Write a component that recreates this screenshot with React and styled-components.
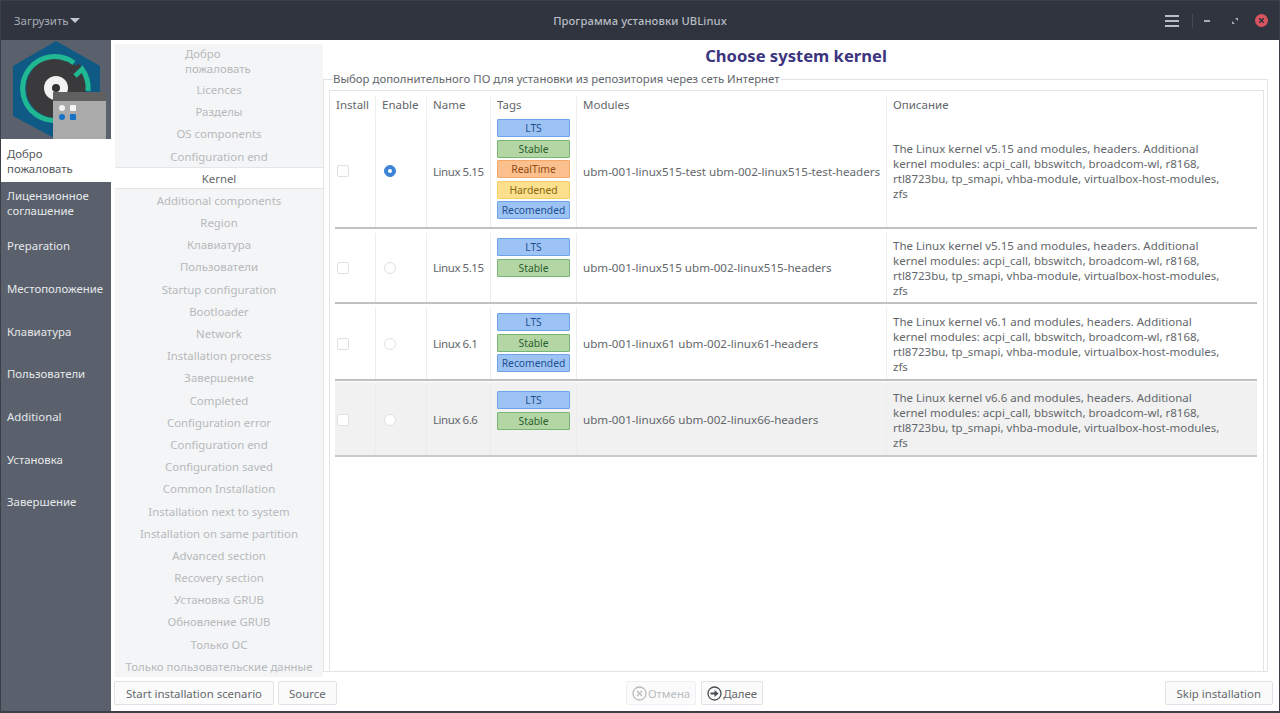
import React from 'react';
import styled, { createGlobalStyle } from 'styled-components';

const GlobalStyle = createGlobalStyle`
  html, body { margin: 0; padding: 0; background: #fff; }
  body { font-family: "Noto Sans", "Liberation Sans", sans-serif; font-size: 11.4px; }
`;

const Window = styled.div`
  width: 1280px;
  height: 713px;
  box-sizing: border-box;
  display: flex;
  flex-direction: column;
  overflow: hidden;
  background: #fff;
  border: 1px solid #3b3f47;
  border-bottom-width: 2px;
  color: #63676b;
`;

const TitleBar = styled.header`
  height: 39px;
  flex: none;
  background: #2f343f;
  display: grid;
  grid-template-columns: 1fr auto 1fr;
  align-items: center;
  color: #b9bdc4;
`;

const LoadMenu = styled.div`
  display: flex;
  align-items: center;
  gap: 2px;
  padding-left: 13px;
  color: #a9adb5;
`;

const Caret = styled.span`
  width: 0;
  height: 0;
  border-left: 5px solid transparent;
  border-right: 5px solid transparent;
  border-top: 5px solid #c4c8ce;
`;

const Title = styled.div`
  font-weight: 500;
  font-size: 11.2px;
  color: #b9bdc4;
  letter-spacing: 0.1px;
`;

const TitleControls = styled.div`
  display: flex;
  justify-content: flex-end;
  align-items: center;
  height: 100%;
  padding-right: 11px;
`;

const ControlIcon = styled.svg`
  display: block;
  margin-left: ${p => p.$gap || 0}px;
`;

const Divider = styled.span`
  width: 1px;
  height: 14px;
  background: #454a55;
  margin-left: 13px;
`;

const Body = styled.div`
  flex: 1;
  min-height: 0;
  display: flex;
`;

const Sidebar = styled.nav`
  width: 110px;
  flex: none;
  background: #5a616c;
  display: flex;
  flex-direction: column;
`;

const LogoBox = styled.div`
  height: 99px;
  flex: none;
`;

const SideItem = styled.div`
  height: 42.67px;
  flex: none;
  box-sizing: border-box;
  display: flex;
  align-items: center;
  padding: ${p => (p.$active ? 1 : 0.2)}px 0 0 6px;
  line-height: 15px;
  background: ${p => (p.$active ? '#fff' : 'transparent')};
  color: ${p => (p.$active ? '#54585c' : '#e6e8eb')};
`;

const Content = styled.div`
  flex: 1;
  min-width: 0;
  display: flex;
  flex-direction: column;
`;

const Upper = styled.div`
  flex: 1;
  min-height: 0;
  display: flex;
`;

const StepList = styled.div`
  width: 208px;
  height: 633px;
  flex: none;
  margin: 4px 0 0 4px;
  background: #f4f5f6;
  overflow: hidden;
  color: #b6b9bc;
`;

const Step = styled.div`
  box-sizing: border-box;
  height: 22.19px;
  display: flex;
  align-items: center;
  justify-content: center;
  white-space: nowrap;
  background: ${p => (p.$active ? '#fff' : 'transparent')};
  color: ${p => (p.$active ? '#63676b' : 'inherit')};
  box-shadow: ${p => (p.$active ? 'inset 0 1px 0 #e4e5e7, inset 0 -1px 0 #e4e5e7' : 'none')};
`;

const WelcomeStep = styled.div`
  height: 34.4px;
  padding: 2px 0 0 70px;
  box-sizing: border-box;
  line-height: 15px;
`;

const Main = styled.main`
  flex: 1;
  min-width: 0;
  display: flex;
  flex-direction: column;
`;

const Heading = styled.h1`
  margin: 0;
  height: 39px;
  flex: none;
  box-sizing: border-box;
  padding: 4px 10px 0 0;
  text-align: center;
  font-size: 16.6px;
  line-height: 24px;
  font-weight: 700;
  color: #3b3580;
`;

const Group = styled.fieldset`
  margin: -7px 11px 0 0;
  height: 600px;
  flex: none;
  box-sizing: border-box;
  min-width: 0;
  border: 1px solid #e3e4e5;
  padding: 4px 3px 3px 5px;
  display: flex;
`;

const GroupLegend = styled.legend`
  padding: 0 1px 0 0;
  margin-left: 4px;
  line-height: 14px;
  font-size: 11.4px;
  color: #63676b;
`;

const TableFrame = styled.div`
  flex: 1;
  border: 1px solid #e3e4e5;
  padding: 3px 6px 0 5px;
  min-width: 0;
  height: 582px;
  box-sizing: border-box;
  font-size: 11.5px;
`;

const columns = '40px 51px 64px 86px 310px 1fr';

const HeadRow = styled.div`
  display: grid;
  grid-template-columns: ${columns};
  height: 21px;
  align-items: center;
`;

const HeadCell = styled.div`
  padding-left: ${p => (p.$first ? 1 : 6)}px;
  line-height: 18px;
  border-left: ${p => (p.$first ? 'none' : '1px solid #eeeeef')};
`;

const Row = styled.div`
  display: grid;
  grid-template-columns: ${columns};
  box-sizing: border-box;
  height: ${p => p.$height}px;
  padding-top: ${p => (p.$selected ? 2 : 0)}px;
  background: ${p => (p.$selected ? '#f1f1f1' : 'transparent')};
`;

const RowLine = styled.div`
  height: 2px;
  background: ${p => (p.$soft ? '#c9cacb' : '#bfc0c1')};
  margin-bottom: ${p => p.$after}px;
`;

const Cell = styled.div`
  display: flex;
  align-items: center;
  box-sizing: border-box;
  min-width: 0;
  padding: 0 6px;
  border-left: ${p => (p.$first ? 'none' : '1px solid #ececed')};
  line-height: 15px;
  white-space: ${p => (p.$wrap ? 'normal' : 'nowrap')};
`;

const NameCell = styled(Cell)`
  letter-spacing: -0.45px;
`;

const ModulesCell = styled(Cell)`
  font-size: 11.6px;
`;

const ControlCell = styled(Cell)`
  padding-left: ${p => (p.$first ? 2 : 8)}px;
`;

const Description = styled.span`
  max-width: 332px;
`;

const CheckBox = styled.span`
  width: 10px;
  height: 10px;
  border: 1px solid #e0e1e2;
  border-radius: 2px;
  background: ${p => (p.$filled ? '#fff' : 'transparent')};
`;

const Radio = styled.span`
  width: 12px;
  height: 12px;
  border-radius: 50%;
  box-sizing: border-box;
  border: 1px solid ${p => (p.$on ? '#3d84d6' : '#e0e1e2')};
  background: ${p => (p.$on ? '#3d84d6' : p.$filled ? '#fff' : 'transparent')};
  display: flex;
  align-items: center;
  justify-content: center;
  &::after {
    content: '';
    display: ${p => (p.$on ? 'block' : 'none')};
    width: 4px;
    height: 4px;
    border-radius: 50%;
    background: #fff;
  }
`;

const TagStack = styled(Cell)`
  flex-direction: column;
  justify-content: flex-start;
  align-items: flex-start;
  padding: ${p => p.$top}px 0 0 6px;
  gap: 2.5px;
`;

const tagColors = {
  blue: ['#9dc3f5', '#6ea3e8', '#1f4f8f'],
  green: ['#b3d6a4', '#76b573', '#2c5f2e'],
  orange: ['#fbc08d', '#f3a866', '#8f4b12'],
  yellow: ['#fde08d', '#f5cf62', '#86670f']
};

const Tag = styled.div`
  width: 73px;
  height: 18px;
  box-sizing: border-box;
  border-radius: 1px;
  font-size: 10.3px;
  line-height: 16px;
  text-align: center;
  background: ${p => tagColors[p.$kind][0]};
  border: 1px solid ${p => tagColors[p.$kind][1]};
  color: ${p => tagColors[p.$kind][2]};
`;

const Footer = styled.footer`
  height: 34px;
  flex: none;
  box-sizing: border-box;
  display: grid;
  grid-template-columns: 1fr auto 1fr;
  align-items: center;
  padding: 0 4px 2px 3px;
`;

const ButtonGroup = styled.div`
  display: flex;
  gap: ${p => p.$gap || 5}px;
  justify-content: ${p => (p.$end ? 'flex-end' : 'flex-start')};
  padding-right: ${p => (p.$end ? 2 : 0)}px;
`;

const Button = styled.div`
  height: 24px;
  box-sizing: border-box;
  padding: 0 ${p => p.$pad || 11}px;
  display: flex;
  align-items: center;
  gap: 1px;
  border: 1px solid ${p => (p.$disabled ? '#eeeff0' : '#e1e2e3')};
  border-radius: 2px;
  background: #fbfbfb;
  color: ${p => (p.$disabled ? '#b9bcbf' : '#63676b')};
  white-space: nowrap;
`;

const Logo = () => (
  <svg width="110" height="99" viewBox="0 0 110 99">
    <polygon points="55,1 99,26 99,76 55,99 12,76 12,26" fill="#0f5a85" />
    <g transform="translate(-1 -1)">
      <circle cx="56" cy="49" r="30" fill="#3a3a3c" />
      <path d="M74 24 A32 32 0 1 0 60 81" fill="none" stroke="#1fb893" strokeWidth="5" />
      <path d="M75 37 L82 30 A32 32 0 0 1 88 52" fill="none" stroke="#1fb893" strokeWidth="5" />
      <path d="M64 41 L80 26" stroke="#3a3a3c" strokeWidth="4" />
      <circle cx="56" cy="49" r="12" fill="#f2f2f2" />
      <circle cx="56" cy="49" r="4" fill="#333" />
    </g>
    <rect x="52" y="52" width="53" height="47" fill="#aaaaaa" />
    <rect x="52" y="52" width="53" height="9" fill="#606060" />
    <rect x="58" y="65" width="6" height="6" rx="3" fill="#f4f4f4" />
    <rect x="69" y="65" width="6" height="6" rx="1" fill="#f4f4f4" />
    <rect x="58" y="74" width="6" height="6" rx="3" fill="#1672c4" />
    <rect x="69" y="74" width="6" height="6" rx="1" fill="#1672c4" />
  </svg>
);

const sideItems = [
  ['Лицензионное', 'соглашение'],
  ['Preparation'],
  ['Местоположение'],
  ['Клавиатура'],
  ['Пользователи'],
  ['Additional'],
  ['Установка'],
  ['Завершение']
];

const steps = [
  'Licences', 'Разделы', 'OS components', 'Configuration end', 'Kernel', 'Additional components',
  'Region', 'Клавиатура', 'Пользователи', 'Startup configuration', 'Bootloader', 'Network',
  'Installation process', 'Завершение', 'Completed', 'Configuration error', 'Configuration end',
  'Configuration saved', 'Common Installation', 'Installation next to system',
  'Installation on same partition', 'Advanced section', 'Recovery section', 'Установка GRUB',
  'Обновление GRUB', 'Только ОС', 'Только пользовательские данные'
];

const describe = v =>
  `The Linux kernel ${v} and modules, headers. Additional kernel modules: acpi_call, bbswitch, broadcom-wl, r8168, rtl8723bu, tp_smapi, vhba-module, virtualbox-host-modules, zfs`;

const rows = [
  {
    name: 'Linux 5.15', height: 112, after: 4, top: 4, on: true,
    tags: [['blue', 'LTS'], ['green', 'Stable'], ['orange', 'RealTime'], ['yellow', 'Hardened'], ['blue', 'Recomended']],
    modules: 'ubm-001-linux515-test ubm-002-linux515-test-headers', desc: describe('v5.15')
  },
  {
    name: 'Linux 5.15', height: 69, after: 4, top: 5,
    tags: [['blue', 'LTS'], ['green', 'Stable']],
    modules: 'ubm-001-linux515 ubm-002-linux515-headers', desc: describe('v5.15')
  },
  {
    name: 'Linux 6.1', height: 71, after: 1, top: 5,
    tags: [['blue', 'LTS'], ['green', 'Stable'], ['blue', 'Recomended']],
    modules: 'ubm-001-linux61 ubm-002-linux61-headers', desc: describe('v6.1')
  },
  {
    name: 'Linux 6.6', height: 73, after: 0, top: 7, selected: true,
    tags: [['blue', 'LTS'], ['green', 'Stable']],
    modules: 'ubm-001-linux66 ubm-002-linux66-headers', desc: describe('v6.6')
  }
];

const headers = ['Install', 'Enable', 'Name', 'Tags', 'Modules', 'Описание'];

export default function App() {
  return (
    <Window>
      <GlobalStyle />
      <TitleBar>
        <LoadMenu>Загрузить <Caret /></LoadMenu>
        <Title>Программа установки UBLinux</Title>
        <TitleControls>
          <ControlIcon width="14" height="12" viewBox="0 0 14 12">
            <path d="M0 1h14M0 6h14M0 11h14" stroke="#b9bdc4" strokeWidth="2" />
          </ControlIcon>
          <Divider />
          <ControlIcon $gap={10} width="8" height="4" viewBox="0 0 8 4">
            <path d="M1 2h6" stroke="#a9adb5" strokeWidth="2" />
          </ControlIcon>
          <ControlIcon $gap={21} width="6" height="6" viewBox="0 0 6 6">
            <path d="M3 0h3v3zM0 3l3 3H0z" fill="#a9adb5" />
          </ControlIcon>
          <ControlIcon $gap={17} width="13" height="13" viewBox="0 0 13 13">
            <circle cx="6.5" cy="6.5" r="6.5" fill="#d9545f" />
            <path d="M4.2 4.2l4.6 4.6M8.8 4.2l-4.6 4.6" stroke="#2f343f" strokeWidth="1.6" />
          </ControlIcon>
        </TitleControls>
      </TitleBar>
      <Body>
        <Sidebar>
          <LogoBox><Logo /></LogoBox>
          <SideItem $active><span>Добро<br />пожаловать</span></SideItem>
          {sideItems.map(lines => (
            <SideItem key={lines[0]}>
              <span>{lines[0]}{lines[1] && <><br />{lines[1]}</>}</span>
            </SideItem>
          ))}
        </Sidebar>
        <Content>
          <Upper>
            <StepList>
              <WelcomeStep>Добро<br />пожаловать</WelcomeStep>
              {steps.map((s, i) => (
                <Step key={i} $active={s === 'Kernel'}>{s}</Step>
              ))}
            </StepList>
            <Main>
              <Heading>Choose system kernel</Heading>
              <Group>
                <GroupLegend>Выбор дополнительного ПО для установки из репозитория через сеть Интернет</GroupLegend>
                <TableFrame>
                  <HeadRow>
                    {headers.map((h, i) => <HeadCell key={h} $first={i === 0}>{h}</HeadCell>)}
                  </HeadRow>
                  {rows.map(r => (
                    <React.Fragment key={r.modules}>
                      <Row $height={r.height} $selected={r.selected}>
                        <ControlCell $first><CheckBox $filled={r.selected} /></ControlCell>
                        <ControlCell><Radio $on={r.on} $filled={r.selected} /></ControlCell>
                        <NameCell>{r.name}</NameCell>
                        <TagStack $top={r.top}>
                          {r.tags.map(([kind, text]) => <Tag key={text} $kind={kind}>{text}</Tag>)}
                        </TagStack>
                        <ModulesCell>{r.modules}</ModulesCell>
                        <Cell $wrap><Description>{r.desc}</Description></Cell>
                      </Row>
                      <RowLine $after={r.after} $soft={r.selected} />
                    </React.Fragment>
                  ))}
                </TableFrame>
              </Group>
            </Main>
          </Upper>
          <Footer>
            <ButtonGroup $gap={4}>
              <Button>Start installation scenario</Button>
              <Button $pad={10}>Source</Button>
            </ButtonGroup>
            <ButtonGroup>
              <Button $disabled $pad={5}>
                <svg width="15" height="15" viewBox="0 0 15 15">
                  <circle cx="7.5" cy="7.5" r="6.5" fill="none" stroke="#b9bcbf" strokeWidth="1.3" />
                  <path d="M5 5l5 5M10 5l-5 5" stroke="#b9bcbf" strokeWidth="1.3" />
                </svg>
                Отмена
              </Button>
              <Button $pad={5}>
                <svg width="15" height="15" viewBox="0 0 15 15">
                  <circle cx="7.5" cy="7.5" r="6.5" fill="none" stroke="#4b4f53" strokeWidth="1.3" />
                  <path d="M3.5 6.5h4V4l4 3.5-4 3.5V8.5h-4z" fill="#4b4f53" />
                </svg>
                Далее
              </Button>
            </ButtonGroup>
            <ButtonGroup $end>
              <Button>Skip installation</Button>
            </ButtonGroup>
          </Footer>
        </Content>
      </Body>
    </Window>
  );
}
